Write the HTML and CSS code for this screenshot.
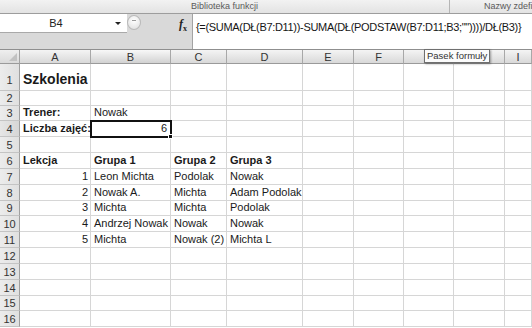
FILE: index.html
```html
<!DOCTYPE html>
<html lang="pl">
<head>
<meta charset="utf-8">
<title>Szkolenia</title>
<link rel="stylesheet" href="styles.css">
</head>
<body>
<div class="app">
  <div class="ribbon">
    <div class="grp g1">Biblioteka funkcji</div>
    <div class="grp g2">Nazwy zdefiniowane</div>
  </div>
  <div class="fbar">
    <div class="left">
      <div class="namebox"><span class="ref">B4</span><span class="drop"></span></div>
      <div class="knob"><span></span></div>
      <div class="fx"><i>f</i><sub>x</sub></div>
    </div>
    <div class="formula">{=(SUMA(DŁ(B7:D11))-SUMA(DŁ(PODSTAW(B7:D11;B3;""))))/DŁ(B3)}</div>
  </div>
  <div class="sheet">
    <div class="corner"></div><div class="ch">A</div><div class="ch sel">B</div><div class="ch">C</div><div class="ch">D</div><div class="ch">E</div><div class="ch">F</div><div class="ch">G</div><div class="ch">H</div><div class="ch">I</div>

    <div class="rh tall">1</div><div class="c title">Szkolenia</div><div class="c"></div><div class="c"></div><div class="c"></div><div class="c"></div><div class="c"></div><div class="c"></div><div class="c"></div><div class="c"></div>
    <div class="rh">2</div><div class="c"></div><div class="c"></div><div class="c"></div><div class="c"></div><div class="c"></div><div class="c"></div><div class="c"></div><div class="c"></div><div class="c"></div>
    <div class="rh">3</div><div class="c b">Trener:</div><div class="c">Nowak</div><div class="c"></div><div class="c"></div><div class="c"></div><div class="c"></div><div class="c"></div><div class="c"></div><div class="c"></div>
    <div class="rh sel">4</div><div class="c b">Liczba zajęć:</div><div class="c r active">6<span class="handle"></span></div><div class="c"></div><div class="c"></div><div class="c"></div><div class="c"></div><div class="c"></div><div class="c"></div><div class="c"></div>
    <div class="rh">5</div><div class="c"></div><div class="c"></div><div class="c"></div><div class="c"></div><div class="c"></div><div class="c"></div><div class="c"></div><div class="c"></div><div class="c"></div>
    <div class="rh">6</div><div class="c b">Lekcja</div><div class="c b">Grupa 1</div><div class="c b">Grupa 2</div><div class="c b">Grupa 3</div><div class="c"></div><div class="c"></div><div class="c"></div><div class="c"></div><div class="c"></div>
    <div class="rh">7</div><div class="c r">1</div><div class="c">Leon Michta</div><div class="c">Podolak</div><div class="c">Nowak</div><div class="c"></div><div class="c"></div><div class="c"></div><div class="c"></div><div class="c"></div>
    <div class="rh">8</div><div class="c r">2</div><div class="c">Nowak A.</div><div class="c">Michta</div><div class="c">Adam Podolak</div><div class="c"></div><div class="c"></div><div class="c"></div><div class="c"></div><div class="c"></div>
    <div class="rh">9</div><div class="c r">3</div><div class="c">Michta</div><div class="c">Michta</div><div class="c">Podolak</div><div class="c"></div><div class="c"></div><div class="c"></div><div class="c"></div><div class="c"></div>
    <div class="rh">10</div><div class="c r">4</div><div class="c">Andrzej Nowak</div><div class="c">Nowak</div><div class="c">Nowak</div><div class="c"></div><div class="c"></div><div class="c"></div><div class="c"></div><div class="c"></div>
    <div class="rh">11</div><div class="c r">5</div><div class="c">Michta</div><div class="c">Nowak (2)</div><div class="c">Michta L</div><div class="c"></div><div class="c"></div><div class="c"></div><div class="c"></div><div class="c"></div>
    <div class="rh">12</div><div class="c"></div><div class="c"></div><div class="c"></div><div class="c"></div><div class="c"></div><div class="c"></div><div class="c"></div><div class="c"></div><div class="c"></div>
    <div class="rh">13</div><div class="c"></div><div class="c"></div><div class="c"></div><div class="c"></div><div class="c"></div><div class="c"></div><div class="c"></div><div class="c"></div><div class="c"></div>
    <div class="rh">14</div><div class="c"></div><div class="c"></div><div class="c"></div><div class="c"></div><div class="c"></div><div class="c"></div><div class="c"></div><div class="c"></div><div class="c"></div>
    <div class="rh">15</div><div class="c"></div><div class="c"></div><div class="c"></div><div class="c"></div><div class="c"></div><div class="c"></div><div class="c"></div><div class="c"></div><div class="c"></div>
    <div class="rh">16</div><div class="c"></div><div class="c"></div><div class="c"></div><div class="c"></div><div class="c"></div><div class="c"></div><div class="c"></div><div class="c"></div><div class="c"></div>
  </div>
  <div class="tooltip">Pasek formuły</div>
</div>
</body>
</html>
```

FILE: styles.css
```css
* { box-sizing: border-box; }
html, body { margin: 0; padding: 0; background: #fff; }
body { width: 532px; height: 328px; overflow: hidden; font-family: "Liberation Sans", Arial, sans-serif; color: #1a1a1a; }
.app { position: relative; width: 532px; height: 328px; overflow: hidden; }

.ribbon { display: flex; height: 14px; background: linear-gradient(#f2f2f2, #e3e3e3); border-bottom: 1px solid #9d9d9d; }
.grp { font-size: 9px; line-height: 13px; color: #5a5a5a; white-space: nowrap; overflow: hidden; }
.g1 { width: 450px; text-align: center; border-right: 1px solid #b5b5b5; }
.g2 { flex: 1; padding-left: 34px; }

.fbar { display: flex; height: 36px; border-bottom: 1px solid #8f8f8f; }
.left { position: relative; width: 193px; background: #d9d9d9; border-right: 1px solid #a3a3a3; }
.namebox { position: absolute; left: 0; top: 0; width: 127px; height: 19px; background: #fff; border-bottom: 1px solid #a9a9a9; display: flex; align-items: center; }
.ref { width: 112px; text-align: center; font-size: 11px; color: #222; }
.drop { width: 0; height: 0; border-left: 3px solid transparent; border-right: 3px solid transparent; border-top: 3px solid #222; margin-left: 3px; }
.knob { position: absolute; left: 127px; top: 1px; width: 14px; height: 15px; border-radius: 50%; background: radial-gradient(circle at 50% 35%, #ffffff, #dcdcdc); border: 1px solid #b9b9b9; }
.knob span { position: absolute; left: 4px; top: 4px; width: 4px; height: 1px; background: #9a9a9a; }
.fx { position: absolute; left: 179px; top: 3px; font-family: "Liberation Serif", serif; font-size: 12px; font-weight: bold; color: #222; }
.fx sub { font-size: 8px; }
.formula { flex: 1; background: #fff; font-size: 11px; line-height: 13px; letter-spacing: -0.32px; padding: 7px 0 0 3px; color: #161616; white-space: nowrap; overflow: hidden; }

.sheet { display: grid; grid-template-columns: 20px 71px 80px 56px 76px 51px 50px 50px 51px 27px; grid-template-rows: 14px 27px 15px 15px 16px 16px 16px 16px 16px 15px 16px 16px 16px 16px 16px 15px 16px; }
.corner { background: linear-gradient(#efefef, #dadada); border-right: 1px solid #a3a3a3; border-bottom: 1px solid #9a9a9a; position: relative; }
.corner::after { content: ""; position: absolute; right: 2px; bottom: 2px; width: 0; height: 0; border-left: 8px solid transparent; border-bottom: 8px solid #c2c2c2; }
.ch { background: linear-gradient(#f4f4f4, #d9d9d9); border-right: 1px solid #a8a8a8; border-bottom: 1px solid #9a9a9a; font-size: 11px; color: #333; text-align: center; line-height: 13px; padding-top: 1px; }
.ch.sel { background: linear-gradient(#f8f8f8, #d2d2d2); }
.rh { background: linear-gradient(90deg, #ececec, #e0e0e0); border-right: 1px solid #9f9f9f; border-bottom: 1px solid #c4c4c4; font-size: 11px; color: #333; display: flex; align-items: center; justify-content: center; }
.rh.tall { padding-top: 6px; }
.rh.sel { background: linear-gradient(90deg, #e6e6e6, #d6d6d6); }
.c { border-right: 1px solid #d6d6d6; border-bottom: 1px solid #d6d6d6; font-size: 11px; line-height: 13px; padding: 0 2px 1px 3px; display: flex; align-items: flex-end; white-space: nowrap; overflow: visible; position: relative; }
.c.b { font-weight: bold; }
.c.r { justify-content: flex-end; padding-right: 2px; }
.c.title { font-size: 14px; font-weight: bold; line-height: 17px; padding-bottom: 2px; }
.c.active { outline: 2px solid #111; outline-offset: -1px; z-index: 2; padding-right: 3px; }
.handle { position: absolute; right: -3px; bottom: -3px; width: 5px; height: 5px; background: #111; border: 1px solid #fff; }

.tooltip { position: absolute; left: 424px; top: 49px; height: 14px; padding: 0 2px; border: 1px solid #6f6f6f; background: #fbfbfb; font-size: 9.5px; line-height: 12px; color: #333; box-shadow: 1px 1px 2px rgba(0,0,0,0.35); white-space: nowrap; }
```
